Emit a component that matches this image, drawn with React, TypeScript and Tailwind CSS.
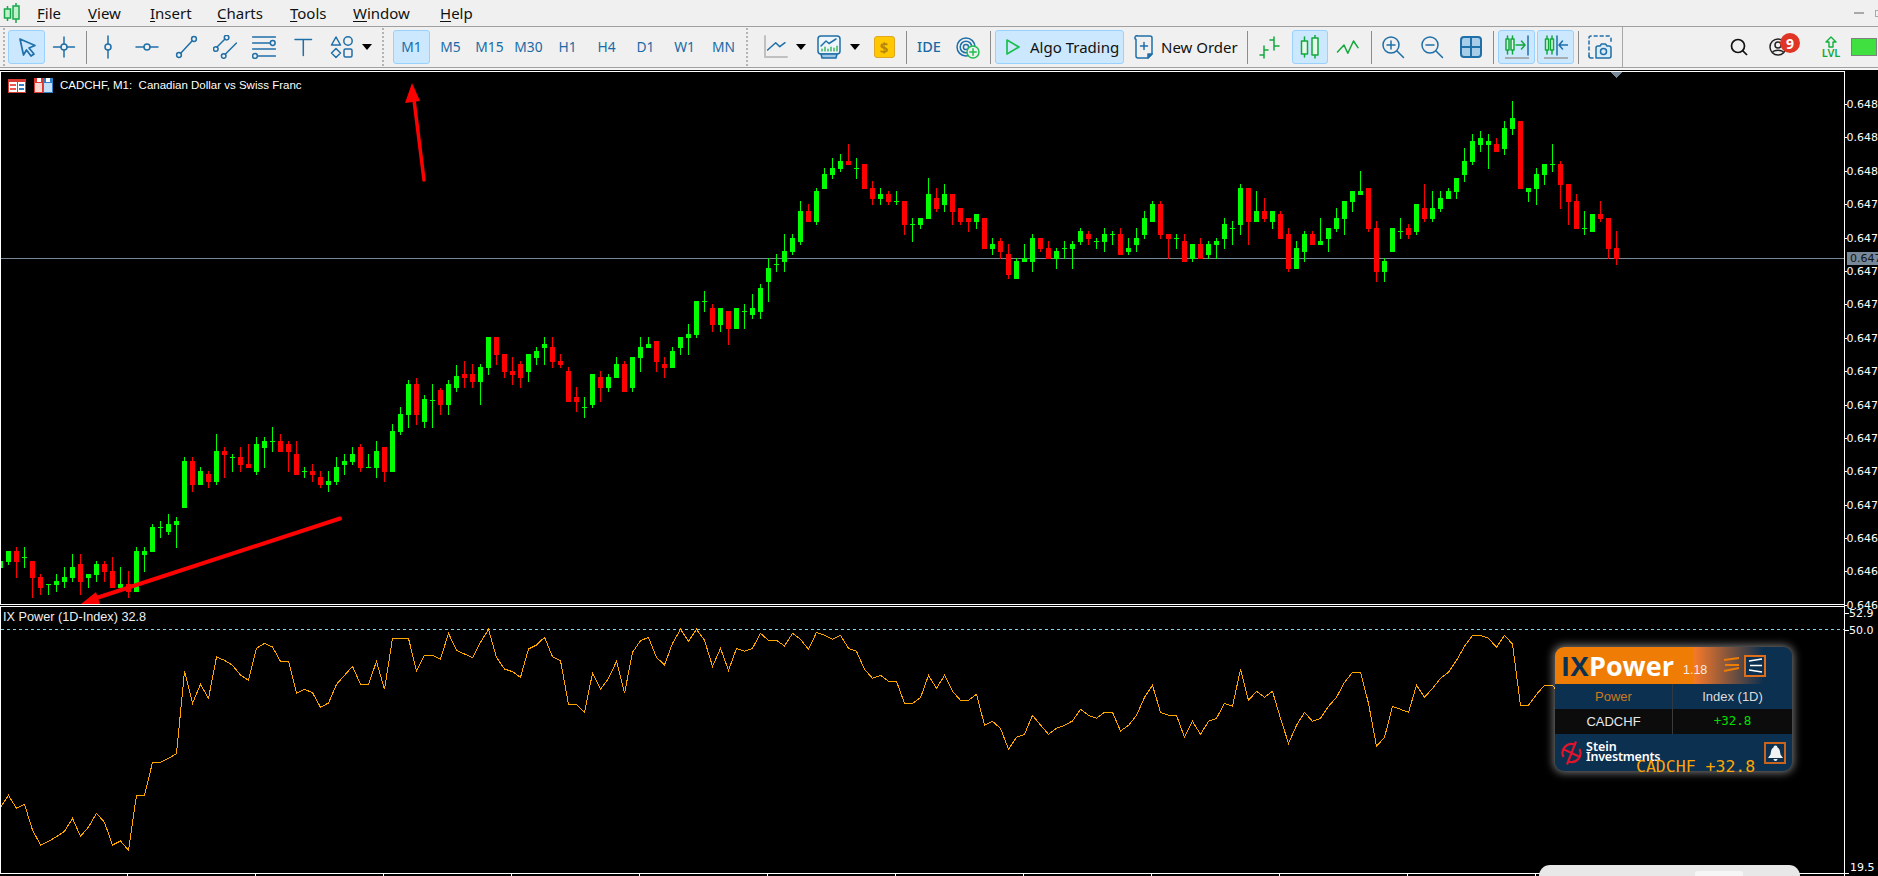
import type { ReactNode } from 'react'

type Row = [number, number, number, number, number]

const BLUE = '#1f6fa8'
const GREEN = '#12a83c'

// candle rows: [green?, high, low, bodyTop, bodyBottom], zoomed crop units (3 per px)
const seg = (start: number, y0: number, rows: Row[]) =>
  rows.map((r, i) => ({
    k: start + i,
    green: r[0] === 1,
    hi: Math.round(y0 + r[1] / 3),
    lo: Math.round(y0 + r[2] / 3),
    top: Math.round(y0 + r[3] / 3),
    bot: Math.round(y0 + r[4] / 3),
  }))

const candles = [
  ...seg(0, 400, [
    [1,483,503,483,503],[1,453,495,453,486],[0,441,534,453,486],[1,441,504,471,473],[0,483,594,483,534],
    [0,522,585,531,564],[1,552,585,552,555],[1,522,576,543,555],[1,501,564,531,546],[1,462,546,501,534],
    [0,462,585,492,546],[1,522,564,522,534],[1,484,546,492,525],[0,484,546,492,516],[0,471,564,513,564],
    [1,501,564,552,564],[0,513,594,552,576],[1,441,576,453,576],[1,441,516,453,465],[1,372,456,381,456],
    [1,363,414,381,384],[1,342,405,372,396],[1,351,444,363,375],[1,171,324,183,324],[0,171,276,183,255],
    [1,201,255,213,255],[0,213,264,222,246],[1,102,255,153,246],[0,141,234,153,165],[1,162,216,171,174],
    [0,141,216,171,195],[0,132,204,192,204],[1,111,225,132,216],[1,111,204,123,144],[1,81,156,123,126],
    [0,102,156,123,156],[0,123,216,132,156],[0,123,225,162,225],[1,201,234,213,216],[0,192,246,213,225],
    [0,213,264,231,255],[1,213,276,243,255],[1,171,255,201,246],[1,162,225,183,195],[1,141,195,162,186],
    [0,132,216,141,204],[1,162,204,201,204],[1,123,234,153,204],[0,141,246,141,216],[1,72,216,93,216],
    [1,21,105,42,96],[1,-60,84,-48,45],[0,-66,75,-48,45],[1,-15,84,-3,66],[1,-48,84,0,3],
    [0,-36,45,-30,15],[1,-60,45,-48,15],[1,-105,-24,-72,-36],
  ]),
  ...seg(58, 240, [
    [0,363,444,402,414],[0,372,444,402,426],[1,372,495,381,426],[1,291,405,291,384],[0,291,375,291,345],
    [0,342,414,342,396],[0,351,435,393,405],[0,363,444,372,414],[1,342,426,342,396],[1,321,375,333,354],
    [1,291,375,312,324],[0,291,384,321,366],[0,342,384,363,375],[0,381,486,393,486],[0,441,516,471,486],
    [1,471,534,501,504],[1,402,504,402,495],[0,393,486,411,444],[1,402,456,411,444],[1,351,414,372,414],
    [0,363,456,372,456],[1,351,456,351,444],[1,291,396,321,354],[1,291,324,312,324],[0,303,396,303,366],
    [0,351,414,372,384],[1,321,384,333,384],[1,291,345,291,324],[1,252,345,282,294],[1,183,294,183,285],
    [1,153,216,183,186],[0,192,276,204,255],[1,204,276,204,255],[0,213,315,213,267],[1,204,267,204,267],
    [1,192,267,213,216],[1,162,237,204,225],[1,132,237,144,216],[1,54,186,84,126],[1,42,96,72,75],
  ]),
  ...seg(98, 130, [
    [1,312,426,363,396],[1,312,375,324,366],[1,213,345,243,336],[0,222,276,243,276],[1,174,285,183,276],
    [1,114,177,132,177],[1,84,147,114,135],[1,72,126,93,117],[0,42,105,93,105],[1,84,147,114,117],
    [0,102,177,102,177],[0,153,225,174,207],[1,174,225,192,207],[0,183,225,192,216],[1,183,225,213,216],
    [0,213,315,213,285],[1,264,336,282,285],[1,264,297,264,285],[1,144,267,192,267],[0,174,246,204,237],
    [1,162,246,192,225],[0,192,285,192,246],[0,234,285,234,276],[0,264,306,264,276],[1,252,297,252,276],
    [0,264,357,264,357],[1,324,375,342,357],[0,324,387,333,366],[0,342,447,372,435],[1,384,447,393,447],
    [1,342,396,384,396],[1,312,426,324,396],[0,324,366,324,357],[0,333,387,354,387],[1,354,417,363,387],
    [1,333,387,354,357],[1,333,417,342,357],[1,294,345,303,336],[0,303,345,312,327],[1,324,357,333,336],
    [1,294,366,312,336],[1,303,345,312,315],[0,294,375,312,375],[1,324,375,354,366],[1,294,366,324,345],
    [1,243,327,264,315],[1,213,276,222,276],[0,213,327,222,315],[0,312,387,312,327],[1,312,357,324,327],
    [0,312,396,333,396],[1,342,396,342,387],[0,324,387,342,387],[1,333,387,342,375],[1,324,387,333,345],
    [1,264,357,282,327],[1,273,345,294,297],
  ]),
  ...seg(155, 90, [
    [1,282,435,294,405],[0,294,465,294,396],[1,303,396,363,396],[0,324,396,363,387],[1,363,417,363,396],
    [0,363,447,372,447],[0,414,546,432,537],[1,453,537,474,537],[1,423,516,432,486],[0,423,465,432,465],
    [1,384,465,453,465],[1,414,486,414,447],[1,354,426,384,417],[1,333,435,333,387],[1,303,366,303,336],
    [1,243,315,303,315],[0,294,426,294,417],[0,393,576,414,546],[1,504,576,513,546],[1,414,486,414,486],
    [1,384,447,423,426],[0,402,447,414,435],[1,342,435,342,426],[0,282,396,354,387],[1,303,396,354,387],
    [1,303,366,324,357],[1,294,327,303,327],[1,264,327,264,306],[1,174,276,213,255],[1,132,225,153,216],
    [1,123,186,144,165],[1,132,237,153,165],[0,144,186,162,186],[1,93,195,114,177],[1,33,135,84,117],
    [0,93,297,93,297],[1,294,336,294,306],[1,234,345,252,297],[1,222,285,222,255],[1,162,246,222,225],
    [0,213,357,222,285],[0,282,405,282,336],[0,312,417,333,417],[1,363,435,414,417],[1,372,426,372,426],
    [0,333,396,372,387],[0,384,507,384,477],[0,423,525,474,507],
  ]),
]

// indicator line, one value per bar
const ixA = [862,826,865,853,930,975,964,950,934,895,949,921,880,907,975,963,991,826,826,727,727,715,701,454,550,493,535,411,421,436,465,481,385,370,381,424,424,520,508,518,562,549,493,466,439,493,493,424,508,355,355,355,453,406,406,417,340,391,402,413,367,328,412]
const ixB = [147,155,172,87,75,52,110,122,253,253,277,160,208,175,124,220,97,62,52,112,135,70,28,64,28,61,139,85,151,85,94,85,40,61,61,78,40,58,88,37,46,58,46,85,94,148,175,166,184,184,250,250,233,166,205,166,214,241,241,223,315,304,325,388,352,343,286]
const ixC = [315,343,325,316,303,268,286,295,277,277,333,316,286,232,196,277,286,286,352,304,343,304,295,250,259,148,241,214,232,214,295,370,316,277,304,295,259,232,187,157,157,250,379,352,259,268,277,196,232,205,175,157,121,79,46,46,55,82,46,72,256,256,223,196,196,225]
const ixPoints = [
  ...ixA.map((z, k) => `${8 * k + 0.5},${520 + z / 3}`),
  ...ixB.map((z, i) => `${8 * (63 + i) + 0.5},${620 + z / 3}`),
  ...ixC.map((z, i) => `${8 * (130 + i) + 0.5},${620 + z / 3}`),
].join(' ')

const priceLabels = ['0.648','0.648','0.648','0.647','0.647','0.647','0.647','0.647','0.647','0.647','0.647','0.647','0.647','0.646','0.646','0.646']

const Ico = ({ children, w = 24 }: { children: ReactNode; w?: number }) => (
  <svg width={w} height={24} viewBox={`0 0 ${w} 24`} fill="none" stroke={BLUE} strokeWidth={1.5} strokeLinecap="round" strokeLinejoin="round">
    {children}
  </svg>
)

const Slot = ({ className, children }: { className: string; children?: ReactNode }) => (
  <div className={`flex h-[34px] shrink-0 items-center justify-center ${className}`}>{children}</div>
)

const Active = ({ className, children }: { className: string; children?: ReactNode }) => (
  <div className={`flex h-[34px] shrink-0 items-center justify-center rounded-[3px] border border-[#99d1ff] bg-[#cce8ff] ${className}`}>{children}</div>
)

const Sep = ({ className }: { className: string }) => <div className={`h-[33px] w-px shrink-0 bg-[#8c8c8c] ${className}`} />

const Grip = ({ className }: { className: string }) => (
  <div className={`h-[38px] w-[3px] shrink-0 border-l-2 border-dotted border-[#b4b4b4] ${className}`} />
)

const Tri = ({ className }: { className: string }) => (
  <Slot className={`w-[12px] ${className}`}>
    <div className="h-0 w-0 border-x-[5px] border-t-[6px] border-x-transparent border-t-black" />
  </Slot>
)

const Tf = ({ label, className = '' }: { label: string; className?: string }) => (
  <Slot className={`w-[39px] text-[13.8px] text-[#1a6aa6] ${className}`}>{label}</Slot>
)

const MenuItem = ({ u, rest, className }: { u: string; rest: string; className: string }) => (
  <div className={`shrink-0 text-[15px] text-[#111] ${className}`}>
    <span className="underline underline-offset-2">{u}</span>
    {rest}
  </div>
)

function MenuBar() {
  return (
    <div className="flex h-[26px] items-center overflow-hidden bg-[#f0f0f0]">
      <div className="ml-[3px] flex w-[34px] shrink-0">
        <svg width="18" height="20" viewBox="0 0 18 20" fill="none" stroke="#17a84a" strokeWidth="1.5">
          <path d="M4.5 3V6M4.5 15V18M13 0V3M13 16V20" />
          <rect x="1.5" y="6" width="6" height="9" fill="#bff0cc" />
          <rect x="10" y="3" width="6" height="13" fill="#bff0cc" />
        </svg>
      </div>
      <MenuItem u="F" rest="ile" className="w-[51px]" />
      <MenuItem u="V" rest="iew" className="w-[62px]" />
      <MenuItem u="I" rest="nsert" className="w-[67px]" />
      <MenuItem u="C" rest="harts" className="w-[73px]" />
      <MenuItem u="T" rest="ools" className="w-[63px]" />
      <MenuItem u="W" rest="indow" className="w-[87px]" />
      <MenuItem u="H" rest="elp" className="w-[50px]" />
      <div className="ml-auto flex shrink-0 items-center">
        <div className="h-[2px] w-[10px] bg-[#a8a8a8]" />
        <div className="ml-[11px] h-[7px] w-[3px] border-y border-l border-[#a8a8a8]" />
      </div>
    </div>
  )
}

function Toolbar() {
  return (
    <div className="flex h-[41px] items-center border-t border-[#a0a0a0] bg-[#f0f0f0]">
      <Grip className="ml-[3px]" />
      <Active className="ml-[2px] w-[37px]">
        <Ico><path d="M5 4L20 10.5L14 13L19 19L16 21L11.5 15L8.5 20Z" strokeWidth={1.7} /></Ico>
      </Active>
      <Slot className="w-[38px]">
        <Ico><path d="M12 2V9M12 15V22M1.5 12H9M15 12H22.5" /><circle cx="12" cy="12" r="3" /></Ico>
      </Slot>
      <Sep className="ml-[3px]" />
      <Slot className="ml-px w-[39px]">
        <Ico><path d="M12 1V9M12 15V23" /><circle cx="12" cy="12" r="3" /></Ico>
      </Slot>
      <Slot className="w-[39px]">
        <Ico><path d="M1 12H9M15 12H23" /><circle cx="12" cy="12" r="3" /></Ico>
      </Slot>
      <Slot className="w-[39px]">
        <Ico><path d="M6.5 18.5L18 6" /><circle cx="5" cy="20" r="2.4" /><circle cx="20" cy="4" r="2.4" /></Ico>
      </Slot>
      <Slot className="w-[39px]">
        <Ico><path d="M4 12L12 4M12.5 19L23.5 8" /><circle cx="2.8" cy="14" r="2.3" /><circle cx="13.6" cy="2.6" r="2.3" /><circle cx="10.7" cy="21" r="2.3" /></Ico>
      </Slot>
      <Slot className="w-[39px]">
        <Ico><path d="M0.5 2H23.5M0.5 8H18M0.5 14H23.5M6 21H23.5" /><circle cx="20.7" cy="8" r="2.4" /><circle cx="3" cy="21" r="2.4" /></Ico>
      </Slot>
      <Slot className="w-[39px]">
        <Ico><path d="M4 4.5H20.5M12.3 4.5V20.5" /></Ico>
      </Slot>
      <Slot className="w-[39px]">
        <Ico>
          <path d="M6 2L10.5 10H1.5Z" /><circle cx="18" cy="6" r="4.2" />
          <path d="M6 13.5L10.5 18L6 22.5L1.5 18Z" /><rect x="14" y="14" width="8" height="8" rx="1.5" />
        </Ico>
      </Slot>
      <Tri className="" />
      <Grip className="ml-[9px]" />
      <Active className="ml-[8px] w-[37px] text-[13.8px] text-[#1a6aa6]">M1</Active>
      <Tf label="M5" className="ml-px" />
      <Tf label="M15" />
      <Tf label="M30" />
      <Tf label="H1" />
      <Tf label="H4" />
      <Tf label="D1" />
      <Tf label="W1" />
      <Tf label="MN" />
      <Grip className="ml-[3px]" />
      <Slot className="ml-[10px] w-[34px]">
        <Ico>
          <path d="M1 1V22H23" stroke="#c0c0c0" strokeWidth={2} />
          <path d="M3.6 15L11.7 7.7L15.8 11.7L21 7.7" />
        </Ico>
      </Slot>
      <Tri className="ml-[2px]" />
      <Slot className="ml-[5px] w-[34px]">
        <Ico>
          <rect x="1" y="1" width="22" height="18" rx="3" fill="#eef6fb" />
          <path d="M4 11L9 6L12 8.5L19 4" />
          <path d="M5 16V14M8 16V12M11 16V14M14 16V12M17 16V13M20 16V11" stroke={GREEN} strokeWidth={1.2} />
          <path d="M4 19H20L19 23H5Z" fill="#9cc6e2" />
        </Ico>
      </Slot>
      <Tri className="ml-[3px]" />
      <Slot className="ml-[6px] w-[34px]">
        <div className="flex h-[22px] w-[21px] items-center justify-center rounded-[3px] border border-[#e0a820] bg-[#ffc800] text-[15px] font-bold text-[#b8860b]">$</div>
      </Slot>
      <Sep className="ml-[5px]" />
      <Slot className="ml-[3px] w-[38px] text-[14.5px] font-medium text-[#1a6aa6]">IDE</Slot>
      <Slot className="ml-px w-[38px]">
        <Ico>
          <path d="M10 3A9 9 0 0 0 10 21A9 9 0 0 0 19 12A9 9 0 0 0 10 3Z" />
          <circle cx="10" cy="12" r="5.8" /><circle cx="10" cy="12" r="2.6" />
          <circle cx="17" cy="17" r="6" fill="#f0f0f0" stroke="#1dbf4f" />
          <path d="M17 13.8V20.2M13.8 17H20.2" stroke="#1dbf4f" />
        </Ico>
      </Slot>
      <Sep className="ml-[3px]" />
      <Active className="ml-[4px] w-[129px] justify-start pl-[9px] text-[15px] text-[#111]">
        <svg width="16" height="18" viewBox="0 0 16 18" fill="none" stroke="#1dbf4f" strokeWidth="1.7" strokeLinejoin="round">
          <path d="M2 2L14 9L2 16Z" />
        </svg>
        <span className="ml-[9px] whitespace-nowrap">Algo Trading</span>
      </Active>
      <Slot className="ml-[2px] w-[115px] justify-start pl-[5px] text-[15px] text-[#111]">
        <Ico>
          <path d="M5 4.5A2 2 0 0 1 7 1H19A2 2 0 0 1 21 3V19L17 23H7A2 2 0 0 1 5 21Z" />
          <path d="M21 19H17V23Z" fill={BLUE} />
          <path d="M13 7.5V14.5M9.5 11H16.5" />
        </Ico>
        <span className="ml-[6px] whitespace-nowrap">New Order</span>
      </Slot>
      <Sep className="ml-[6px]" />
      <Slot className="ml-[3px] w-[38px]">
        <Ico>
          <path d="M6 11V23M6 15H10M6 20H2M16 2V15M16 5H12M16 11H21" stroke={GREEN} />
        </Ico>
      </Slot>
      <Active className="ml-[3px] w-[36px]">
        <Ico>
          <path d="M6.5 2V6M6.5 19V22M17 0V3M17 20V23" stroke={GREEN} />
          <rect x="3.5" y="6" width="6" height="13" fill="#e5fbe9" stroke={GREEN} />
          <rect x="14" y="3" width="6" height="17" fill="#e5fbe9" stroke={GREEN} />
        </Ico>
      </Active>
      <Slot className="ml-px w-[38px]">
        <Ico><path d="M1.5 17L8 10L11.8 18.3L17.5 6L22 12.7" stroke={GREEN} /></Ico>
      </Slot>
      <Sep className="ml-[4px]" />
      <Slot className="ml-[2px] w-[38px]">
        <Ico><circle cx="10" cy="10" r="8" /><path d="M16 16L22.5 22.5M10 6V14M6 10H14" /></Ico>
      </Slot>
      <Slot className="ml-px w-[38px]">
        <Ico><circle cx="10" cy="10" r="8" /><path d="M16 16L22.5 22.5M6 10H14" /></Ico>
      </Slot>
      <Slot className="ml-px w-[38px]">
        <Ico>
          <rect x="2" y="2" width="20" height="20" rx="3" fill="#a8cde8" strokeWidth={2} />
          <path d="M12 2V22M2 12H22" strokeWidth={2} />
        </Ico>
      </Slot>
      <Sep className="ml-[3px]" />
      <Active className="ml-[4px] w-[37px]">
        <Ico>
          <path d="M2.5 1V19M7.5 1V19" stroke={GREEN} />
          <rect x="1" y="4" width="3" height="11" fill="#e5fbe9" stroke={GREEN} />
          <rect x="6" y="4" width="3" height="11" fill="#e5fbe9" stroke={GREEN} />
          <path d="M11 10H20M16.5 6L20 10L16.5 14" stroke={GREEN} />
          <path d="M23 1V20" />
          <path d="M0 23H24" stroke="#9a9a9a" />
        </Ico>
      </Active>
      <Active className="ml-[2px] w-[37px]">
        <Ico>
          <path d="M3 1V19M8 1V19" stroke={GREEN} />
          <rect x="1.5" y="4" width="3" height="11" fill="#e5fbe9" stroke={GREEN} />
          <rect x="6.5" y="4" width="3" height="11" fill="#e5fbe9" stroke={GREEN} />
          <path d="M13 1V20M24 10H15M18.5 6L15 10L18.5 14" />
          <path d="M0 23H24" stroke="#9a9a9a" />
        </Ico>
      </Active>
      <Sep className="ml-[4px]" />
      <Slot className="ml-[2px] w-[38px]">
        <Ico>
          <path d="M1 21V3A2 2 0 0 1 3 1H21A2 2 0 0 1 23 3V7" strokeDasharray="3 3" />
          <path d="M1 21A2 2 0 0 0 3 23H5" />
          <path d="M8 23H21A2 2 0 0 0 23 21V13A2 2 0 0 0 21 11H19L17.5 9H13.5L12 11H10A2 2 0 0 0 8 13Z" fill="#dcecf7" />
          <circle cx="15.5" cy="16.5" r="3" />
        </Ico>
      </Slot>
      <div className="ml-[3px] h-[40px] w-px shrink-0 bg-[#a8a8a8]" />
      <Slot className="ml-[101px] w-[30px]">
        <svg width="20" height="20" viewBox="0 0 20 20" fill="none" stroke="#111" strokeWidth="1.7">
          <circle cx="9" cy="9" r="6.5" /><path d="M13.5 13.5L18 18" />
        </svg>
      </Slot>
      <Slot className="relative ml-[9px] w-[30px]">
        <svg width="20" height="20" viewBox="0 0 20 20" fill="none" stroke="#222" strokeWidth="1.5">
          <circle cx="10" cy="10" r="8" /><circle cx="10" cy="8" r="3" /><path d="M4.5 15.5C6 12.5 14 12.5 15.5 15.5" />
        </svg>
        <div className="absolute left-[17px] top-[3px] flex h-[20px] w-[20px] items-center justify-center rounded-full bg-[#e03524] text-[14px] font-bold text-white">9</div>
      </Slot>
      <Slot className="ml-[23px] w-[30px] flex-col">
        <svg width="12" height="12" viewBox="0 0 12 12" fill="none" stroke="#12b03c" strokeWidth="1.4" strokeLinejoin="round">
          <path d="M6 1L11 6H8V11H4V6H1Z" />
        </svg>
        <span className="mt-[-1px] text-[11px] font-semibold leading-[12px] text-[#12a83c]">LVL</span>
      </Slot>
      <div className="ml-[5px] flex h-[18px] w-[26px] shrink-0 border border-[#808080] bg-white">
        <div className="h-full w-[24px] bg-[#40e040]" />
      </div>
    </div>
  )
}

function PriceChart() {
  return (
    <svg width="1843" height="532" viewBox="1 72 1843 532" className="block" shapeRendering="crispEdges">
      <line x1="1" x2="1844" y1="258.5" y2="258.5" stroke="#778899" />
      {candles.map((c) => {
        const fill = c.green ? '#00ff00' : '#ff0000'
        return (
          <g key={c.k} fill={fill}>
            <rect x={8 * c.k} y={c.hi} width="1" height={Math.max(1, c.lo - c.hi)} />
            <rect x={8 * c.k - 2} y={c.top} width="5" height={Math.max(1, c.bot - c.top)} />
          </g>
        )
      })}
      <polygon points="1610,72 1622,72 1616,78" fill="#778899" />
      <g shapeRendering="auto">
        <line x1="340" y1="518.5" x2="98" y2="597.5" stroke="#ff0000" strokeWidth="4" strokeLinecap="round" />
        <polygon points="81,604 96,592 100,604" fill="#ff0000" />
        <line x1="424" y1="180" x2="414" y2="100" stroke="#ff0000" strokeWidth="3.5" strokeLinecap="round" />
        <polygon points="412,83 405,103 420,101" fill="#ff0000" />
      </g>
    </svg>
  )
}

function IxChart() {
  return (
    <svg width="1843" height="266" viewBox="1 607 1843 266" className="block" shapeRendering="crispEdges">
      <line x1="1" x2="1844" y1="629.5" y2="629.5" stroke="#87ceeb" strokeDasharray="3 3" />
      <polyline points={ixPoints} fill="none" stroke="#ffa500" strokeWidth="1" />
    </svg>
  )
}

function PowerPanel() {
  return (
    <div className="absolute left-[1555px] top-[577px] w-[237px]">
      <div className="overflow-hidden rounded-[9px] bg-[#0c3050] font-['Liberation_Sans',sans-serif] shadow-[0_0_9px_2px_rgba(255,255,255,0.45)]">
        <div className="flex h-[37px] items-center bg-[linear-gradient(90deg,#ef7d05_0%,#ef7d05_58%,#f4782a_59%,#0c3050_88%)] pl-[6px]">
          <span className="font-['Open_Sans',sans-serif] text-[27px] font-bold leading-none tracking-[0.5px] text-[#0c3050]">IX</span>
          <span className="font-['Open_Sans',sans-serif] text-[27px] font-bold leading-none text-white">Power</span>
          <span className="ml-[9px] mt-[9px] text-[12.5px] leading-none text-[#f4ece0]">1.18</span>
          <svg width="16" height="16" viewBox="0 0 16 16" fill="none" stroke="#ef7d05" strokeWidth="2" className="ml-[16px] mt-[-1px]">
            <path d="M1 3L16 1M2 8H16M1 14L16 11" />
          </svg>
          <div className="ml-[5px] flex h-[22px] w-[22px] items-center justify-center border-2 border-[#e06d1a] bg-[#0c3050]">
            <svg width="16" height="15" viewBox="0 0 16 15" fill="none" stroke="#fff" strokeWidth="1.5">
              <path d="M2 3L15 1M3 7.5H15M2 12L15 14" />
            </svg>
          </div>
        </div>
        <div className="flex h-[25px] text-[13px]">
          <div className="flex w-[118px] items-center justify-center border-r border-[#2f3a44] text-[#cc7a1e]">Power</div>
          <div className="flex flex-1 items-center justify-center text-[#dcdcdc]">Index (1D)</div>
        </div>
        <div className="flex h-[25px] bg-[#0c0c0c] text-[13px]">
          <div className="flex w-[118px] items-center justify-center border-r border-[#3a3a3a] text-[#e8e8e8]">CADCHF</div>
          <div className="flex flex-1 items-center justify-center font-['DejaVu_Sans_Mono',monospace] text-[12.5px] text-[#00e000]">+32.8</div>
        </div>
        <div className="flex h-[37px] items-center pl-[6px]">
          <svg width="21" height="24" viewBox="0 0 21 24" fill="none" stroke="#e0142c" strokeWidth="2.2">
            <path d="M2.5 16A9 9 0 0 1 13.5 3.5M18.5 8A9 9 0 0 1 7.5 20.5M15 0.5L6 23.5M2 8L19 16" />
          </svg>
          <div className="ml-[4px] mt-[-1px] font-['Noto_Sans',sans-serif] text-[12.5px] font-semibold leading-[10px] text-white">
            <div>Stein</div>
            <div className="tracking-[-0.2px]">Investments</div>
          </div>
          <div className="ml-auto mr-[6px] flex h-[22px] w-[22px] items-center justify-center border-2 border-[#c8641e] bg-[#0c3050]">
            <svg width="17" height="16" viewBox="0 0 17 16" fill="#f2f2f2">
              <path d="M8.5 0.5C10 0.5 10.5 2 10.5 2.5C13 3.5 13 7 13.5 9.5L16 13H1L3.5 9.5C4 7 4 3.5 6.5 2.5C6.5 2 7 0.5 8.5 0.5ZM6.5 14H10.5C10.5 15.2 9.5 16 8.5 16C7.5 16 6.5 15.2 6.5 14Z" />
            </svg>
          </div>
        </div>
      </div>
      <div className="absolute left-[81px] top-[112px] whitespace-nowrap font-['DejaVu_Sans_Mono',monospace] text-[16.5px] leading-none text-[#ffa500]">CADCHF +32.8</div>
    </div>
  )
}

function Axis() {
  return (
    <div className="relative flex w-[33px] shrink-0 flex-col overflow-visible pt-[34px] font-['DejaVu_Sans',sans-serif] text-[11px] leading-none text-white">
      <div className="flex flex-col gap-[32.4px]">
        {priceLabels.map((p, i) => (
          <div key={i} className="flex h-px items-center whitespace-nowrap">
            <div className="h-px w-[4px] bg-white" />
            <span>{p}</span>
          </div>
        ))}
      </div>
      <div className="mt-[7px] flex h-px items-center whitespace-nowrap">
        <div className="h-px w-[4px] bg-white" />
        <span>52.9</span>
      </div>
      <div className="mt-[16px] flex h-px items-center whitespace-nowrap">
        <div className="h-px w-[4px] bg-white" />
        <span>50.0</span>
      </div>
      <div className="mt-[242px] flex h-px items-center whitespace-nowrap">
        <div className="h-px w-[4px] bg-white" />
        <span className="mt-[-11px] ml-px">19.5</span>
      </div>
      <div className="absolute left-[2px] top-[182px] flex h-[13px] w-[31px] items-center bg-[#778899] pl-[3px] text-[#111]">0.647</div>
    </div>
  )
}

export default function App() {
  return (
    <div className="h-[876px] w-[1878px] overflow-hidden bg-black font-['Noto_Sans',sans-serif]">
      <MenuBar />
      <Toolbar />
      <div className="h-px bg-[#a0a0a0]" />
      <div className="h-[2px] bg-[#f4f4f4]" />
      <div className="relative flex h-[806px] bg-black">
        <div className="w-[1845px] shrink-0 pt-px">
          <div className="relative border border-r-0 border-white">
            <PriceChart />
            <div className="absolute left-[7px] top-[6px] flex items-center">
              <svg width="18" height="14" viewBox="0 0 18 14" shapeRendering="crispEdges">
                <rect width="18" height="14" fill="#d93a32" />
                <rect x="1" y="3" width="8" height="10" fill="#fff" />
                <rect x="10" y="3" width="7" height="10" fill="#fff" />
                <path d="M2 5H8V7H2ZM2 9H8V11H2Z" fill="#e8574f" />
                <path d="M11 5H16V7H11ZM11 9H16V11H11Z" fill="#2f7fc4" />
              </svg>
              <svg width="19" height="15" viewBox="0 0 19 15" className="ml-[8px]" shapeRendering="crispEdges">
                <rect width="9" height="15" fill="#d93a32" />
                <rect x="9" width="10" height="15" fill="#2f7fc4" />
                <rect x="1" y="5" width="7" height="9" fill="#fbd8d0" />
                <rect x="10" y="5" width="8" height="9" fill="#bfe0f8" />
                <rect x="3" width="4" height="4" fill="#fff" />
                <rect x="12" width="4" height="4" fill="#fff" />
              </svg>
              <span className="ml-[7px] whitespace-pre font-['Liberation_Sans',sans-serif] text-[11.5px] leading-none text-white">CADCHF, M1:  Canadian Dollar vs Swiss Franc</span>
            </div>
          </div>
          <div className="relative mt-px border border-r-0 border-white">
            <IxChart />
            <div className="absolute left-[2px] top-[4px] whitespace-nowrap font-['Liberation_Sans',sans-serif] text-[12.7px] leading-none text-[#f0f0f0]">IX Power (1D-Index) 32.8</div>
          </div>
          <div className="flex h-[3px]">
            {Array.from({ length: 14 }).map((_, i) => (
              <div key={i} className="h-full w-[128px] shrink-0 border-r border-white" />
            ))}
          </div>
        </div>
        <div className="absolute bottom-[-1px] left-[1844px] top-px w-px bg-white" />
        <Axis />
        <PowerPanel />
        <div className="absolute bottom-0 left-[1539px] h-[11px] w-[261px] rounded-t-[11px] bg-[#e8e8e8]">
          <div className="absolute bottom-0 left-[156px] h-[5px] w-[48px] rounded-t-[3px] bg-[#f6f6f6]" />
        </div>
      </div>
    </div>
  )
}
